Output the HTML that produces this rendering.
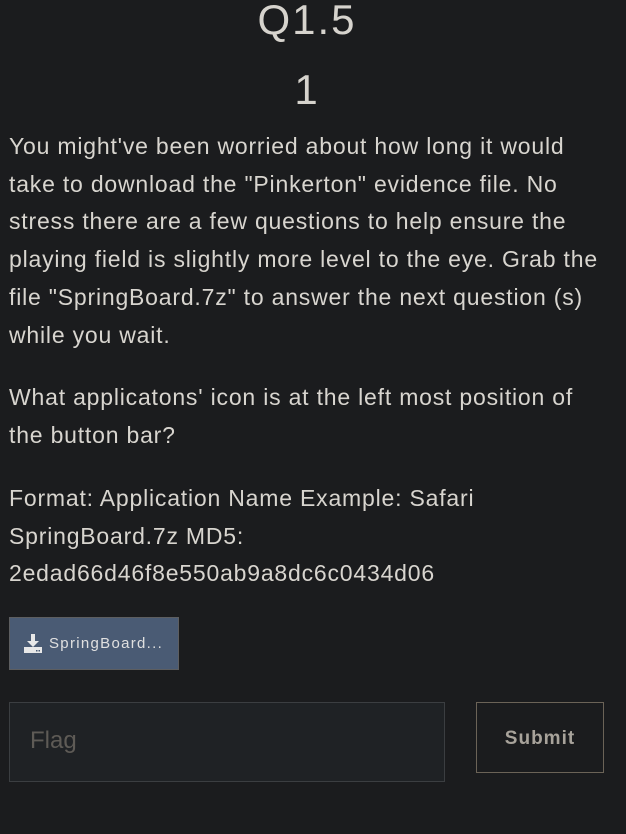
<!DOCTYPE html>
<html><head><style>
body{margin:0;background:#1b1c1e;color:#d8d5cf;font-family:"Liberation Sans",sans-serif;width:626px;height:834px;overflow:hidden;position:relative}
.t{position:absolute;left:0;width:614px;text-align:center;font-size:42px;color:#d6d3cd;letter-spacing:2px}
.p{position:absolute;left:9px;font-size:23px;line-height:37.7px;white-space:nowrap;letter-spacing:0.8px}
.btn{position:absolute;left:9px;top:617px;width:168px;height:51px;background:#4a5b74;border:1px solid #5d5e60;color:#e0e0e0;font-size:15px;letter-spacing:1.3px}
.in{position:absolute;left:9px;top:702px;width:434px;height:78px;background:#1f2225;border:1px solid #3b3e41}
.sub{position:absolute;left:476px;top:702px;width:126px;height:69px;border:1px solid #6b6357;color:#a8a39b;font-weight:bold;font-size:19px;text-align:center;line-height:71px;letter-spacing:1px}
</style></head><body>
<div class="t" style="top:-4px">Q1.5</div>
<div class="t" style="top:66px">1</div>
<div class="p" style="top:128px">You might've been worried about how long it would<br>take to download the "Pinkerton" evidence file. No<br>stress there are a few questions to help ensure the<br>playing field is slightly more level to the eye. Grab the<br>file "SpringBoard.7z" to answer the next question (s)<br>while you wait.</div>
<div class="p" style="top:379px">What applicatons' icon is at the left most position of<br>the button bar?</div>
<div class="p" style="top:480px">Format: Application Name Example: Safari<br>SpringBoard.7z MD5:<br>2edad66d46f8e550ab9a8dc6c0434d06</div>
<div class="btn"><svg style="position:absolute;left:13px;top:16px" width="20" height="20" viewBox="0 0 20 20"><path d="M8 0h4v7h4l-6 6-6-6h4z" fill="#e8e8e8"/><rect x="1" y="13" width="18" height="6" fill="#e8e8e8"/><rect x="13" y="16" width="1.5" height="1.5" fill="#4a5b74"/><rect x="15.5" y="16" width="1.5" height="1.5" fill="#4a5b74"/></svg><span style="position:absolute;left:39px;top:17px">SpringBoard...</span></div>
<div class="in"><span style="position:absolute;left:20px;top:24px;font-size:24px;color:#5e5b56">Flag</span></div>
<div class="sub">Submit</div>
</body></html>
